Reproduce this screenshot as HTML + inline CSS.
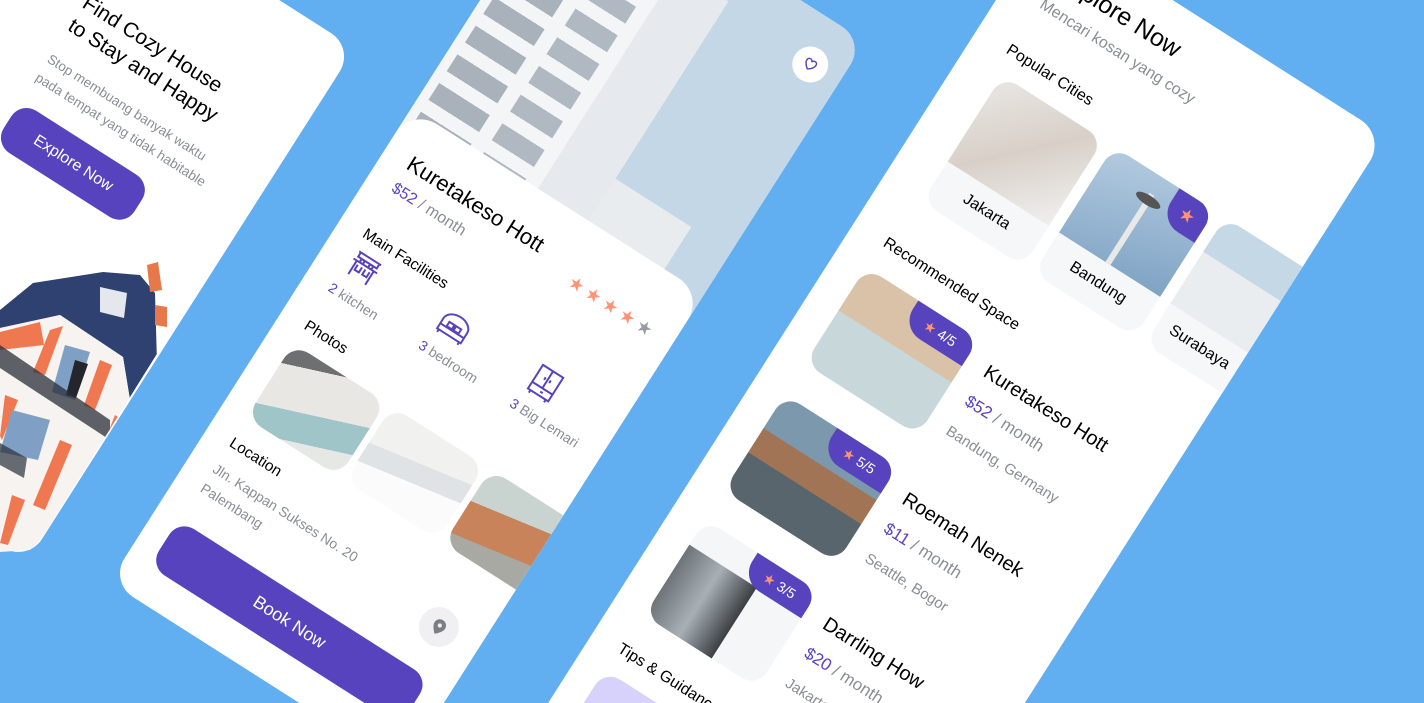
<!DOCTYPE html>
<html style="width:1424px;height:703px;overflow:hidden;background:#61AEF0"><head><meta charset="utf-8">
<style>
*{margin:0;padding:0;box-sizing:border-box}
body{width:1424px;height:703px;overflow:hidden;background:#61AEF0;font-family:"Liberation Sans",sans-serif;position:relative}
.rot{position:absolute;left:0;top:0;transform-origin:0 0;transform:rotate(32.5deg)}
.card{position:absolute;background:#fff;overflow:hidden}
.a{position:absolute;white-space:nowrap}
.t{color:#000}
.g{color:#8a8d96}
.p{color:#5843BE}
.btn{position:absolute;background:#5843BE;color:#fff;border-radius:18px;text-align:center}
.badge{position:absolute;right:0;top:0;background:#5843BE;color:#fff;border-radius:0 18px 0 22px;font-size:14px;line-height:32px;text-align:center}
.badge b{color:#FF9376;font-weight:400}
.ph{position:absolute;border-radius:18px;overflow:hidden}
</style></head><body>

<div class="rot">
 <!-- CARD 1 -->
 <div class="card" style="left:-40px;top:-150px;width:365px;height:610px;border-radius:28px">
  <div class="a t" style="left:112px;top:92px;font-size:21px;line-height:27px">Find Cozy House<br>to Stay and Happy</div>
  <div class="a g" style="left:112px;top:162px;font-size:13.5px;line-height:22px">Stop membuang banyak waktu<br>pada tempat yang tidak habitable</div>
  <div class="btn" style="left:112px;top:224px;width:155px;height:50px;line-height:50px;font-size:16px">Explore Now</div>
 </div>

 <!-- CARD 2 -->
 <div class="card" style="left:405px;top:-430px;width:347px;height:862px;border-radius:28px">
  <div style="position:absolute;left:0;top:0;width:347px;height:330px;background:#C4D7E6">
   <div style="position:absolute;left:0;top:40px;width:210px;height:300px;background:#f3f5f7"></div>
   <div style="position:absolute;left:10px;top:60px;width:60px;height:260px;background:repeating-linear-gradient(180deg,#a9b2bb 0 20px,#f3f5f7 20px 34px)"></div>
   <div style="position:absolute;left:85px;top:60px;width:50px;height:260px;background:repeating-linear-gradient(180deg,#b0b9c1 0 20px,#f3f5f7 20px 34px)"></div>
   <div style="position:absolute;left:150px;top:40px;width:60px;height:300px;background:#e6eaee"></div>
   <div style="position:absolute;left:210px;top:250px;width:90px;height:60px;background:#e8ecef"></div>
  </div>
  <div style="position:absolute;left:295px;top:31px;width:36px;height:36px;border-radius:50%;background:#fff;text-align:center;line-height:36px">
   <svg width="16" height="16" viewBox="0 0 24 24" style="vertical-align:middle"><path d="M12 20s-8-5-8-11a4 4 0 0 1 8-1 4 4 0 0 1 8 1c0 6-8 11-8 11z" fill="none" stroke="#5843BE" stroke-width="2.2"/></svg>
  </div>
  <div style="position:absolute;left:0;top:300px;width:347px;height:720px;background:#fff;border-radius:30px 30px 0 0"></div>
  <div class="a t" style="left:27px;top:334px;font-size:22px">Kuretakeso Hott</div>
  <div class="a" style="left:27px;top:368px;font-size:16px"><span class="p">$52</span><span class="g"> / month</span></div>
  <div class="a" style="left:226px;top:350px;font-size:18px;letter-spacing:4px;color:#FF9376">★★★★<span style="color:#989ba4">★</span></div>
  <div class="a t" style="left:27px;top:422px;font-size:15.5px">Main Facilities</div>
  <svg class="a" style="left:30px;top:446px" width="32" height="30" viewBox="0 0 32 30"><g fill="none" stroke="#5843BE" stroke-width="2"><path d="M3 3h26M5 3v5h22V3M2 12h28M6 12v16M26 12v16M9 15v6h5v-6M18 15v6h5v-6M11 8a2 2 0 1 0 0.1 0M21 8a2 2 0 1 0 0.1 0"/></g></svg>
  <div class="a" style="left:27px;top:486px;font-size:14px"><span class="p">2</span><span class="g"> kitchen</span></div>
  <svg class="a" style="left:137px;top:446px" width="34" height="30" viewBox="0 0 34 30"><g fill="none" stroke="#5843BE" stroke-width="2"><path d="M3 26V14a14 10 0 0 1 28 0v12H3zM3 20h28M10 14h6v5h-6zM18 14h6v5h-6zM5 26v3M29 26v3"/></g></svg>
  <div class="a" style="left:134px;top:486px;font-size:14px"><span class="p">3</span><span class="g"> bedroom</span></div>
  <svg class="a" style="left:246px;top:444px" width="30" height="34" viewBox="0 0 30 34"><g fill="none" stroke="#5843BE" stroke-width="2"><path d="M3 2h24v28H3zM15 2v20M3 22h24M6 30v3M24 30v3M12 11v3M18 11v3M15 26h3"/></g></svg>
  <div class="a" style="left:242px;top:486px;font-size:14px"><span class="p">3</span><span class="g"> Big Lemari</span></div>
  <div class="a t" style="left:27px;top:531px;font-size:15.5px">Photos</div>
  <div class="ph" style="left:27px;top:562px;width:110px;height:88px;background:linear-gradient(160deg,#6d6f70 0 18%,#e9e7e4 18% 55%,#9fc5c9 55% 80%,#e6e8e6 80%)"></div>
  <div class="ph" style="left:144px;top:562px;width:110px;height:88px;background:linear-gradient(170deg,#f1f1f0 0 40%,#dfe3e6 40% 60%,#fbfbfb 60%)"></div>
  <div class="ph" style="left:261px;top:562px;width:110px;height:88px;background:linear-gradient(170deg,#c9d3d0 0 35%,#c9835a 35% 70%,#a8a9a3 70%)"></div>
  <div class="a t" style="left:27px;top:670px;font-size:15.5px">Location</div>
  <div class="a g" style="left:27px;top:698px;font-size:14px;line-height:23px">Jln. Kappan Sukses No. 20<br>Palembang</div>
  <div style="position:absolute;left:282px;top:703px;width:40px;height:40px;border-radius:50%;background:#f0f0f2;text-align:center;line-height:40px">
   <svg width="14" height="16" viewBox="0 0 14 18" style="vertical-align:middle"><path d="M7 0a7 7 0 0 1 7 7c0 5-7 11-7 11S0 12 0 7a7 7 0 0 1 7-7z" fill="#7b7e86"/><circle cx="7" cy="7" r="2.4" fill="#f0f0f2"/></svg>
  </div>
  <div class="btn" style="left:25px;top:772px;width:297px;height:55px;line-height:55px;font-size:18px">Book Now</div>
 </div>

 <!-- CARD 3 -->
 <div class="card" style="left:840px;top:-630px;width:402px;height:1200px;border-radius:30px">
  <div class="a t" style="left:40px;top:26px;font-size:25px">Explore Now</div>
  <div class="a g" style="left:40px;top:65px;font-size:16px">Mencari kosan yang cozy</div>
  <div class="a t" style="left:36px;top:121px;font-size:16px">Popular Cities</div>
  <div class="ph" style="left:46px;top:155px;width:120px;height:150px;background:#f6f7f8">
   <div style="position:absolute;left:0;top:0;width:120px;height:102px;background:linear-gradient(135deg,#e9e6e3,#d8d0c8 50%,#f0efee)"></div>
   <div class="a t" style="left:0;width:120px;text-align:center;top:115px;font-size:16px">Jakarta</div>
  </div>
  <div class="ph" style="left:178px;top:155px;width:120px;height:150px;background:#f6f7f8">
   <div style="position:absolute;left:0;top:0;width:120px;height:102px;background:linear-gradient(160deg,#b3cbe0,#7fa3c4)"></div>
   <div style="position:absolute;left:55px;top:20px;width:6px;height:82px;background:#e8e8e8"></div>
   <div style="position:absolute;left:44px;top:22px;width:28px;height:10px;border-radius:50%;background:#555"></div>
   <div class="badge" style="width:42px;height:38px;line-height:38px;font-size:18px"><b>★</b></div>
   <div class="a t" style="left:0;width:120px;text-align:center;top:115px;font-size:16px">Bandung</div>
  </div>
  <div class="ph" style="left:310px;top:155px;width:120px;height:150px;background:#f6f7f8">
   <div style="position:absolute;left:0;top:0;width:120px;height:102px;background:linear-gradient(180deg,#c5d8e6 0 40%,#e9edf0 40%)"></div>
   <div class="a t" style="left:14px;top:115px;font-size:16px">Surabaya</div>
  </div>
  <div class="a t" style="left:36px;top:350px;font-size:16px">Recommended Space</div>

  <div class="ph" style="left:34px;top:390px;width:134px;height:114px;background:linear-gradient(180deg,#d9c2a8 0 45%,#c8d8da 45% 100%)">
   <div class="badge" style="width:72px"><b>★</b> 4/5</div></div>
  <div class="a t" style="left:190px;top:402px;font-size:20px">Kuretakeso Hott</div>
  <div class="a" style="left:190px;top:438px;font-size:17px"><span class="p">$52</span><span class="g"> / month</span></div>
  <div class="a g" style="left:190px;top:475px;font-size:15px">Bandung, Germany</div>

  <div class="ph" style="left:34px;top:541px;width:134px;height:114px;background:linear-gradient(180deg,#7b98ad 0 35%,#a07454 35% 60%,#58656d 60%)">
   <div class="badge" style="width:72px"><b>★</b> 5/5</div></div>
  <div class="a t" style="left:190px;top:553px;font-size:20px">Roemah Nenek</div>
  <div class="a" style="left:190px;top:589px;font-size:17px"><span class="p">$11</span><span class="g"> / month</span></div>
  <div class="a g" style="left:190px;top:626px;font-size:15px">Seattle, Bogor</div>

  <div class="ph" style="left:34px;top:689px;width:134px;height:114px;background:#f4f6f8">
   <div style="position:absolute;left:0;top:30px;width:80px;height:84px;background:linear-gradient(90deg,#6d7378,#a8b0b6,#3b3f43)"></div>
   <div class="badge" style="width:72px"><b>★</b> 3/5</div></div>
  <div class="a t" style="left:190px;top:701px;font-size:20px">Darrling How</div>
  <div class="a" style="left:190px;top:737px;font-size:17px"><span class="p">$20</span><span class="g"> / month</span></div>
  <div class="a g" style="left:190px;top:774px;font-size:15px">Jakarta</div>

  <div class="a t" style="left:30px;top:835px;font-size:16px">Tips &amp; Guidance</div>
  <div class="ph" style="left:30px;top:870px;width:80px;height:80px;background:#d7d2fb"></div>
 </div>
</div>

<!-- building photo on card 1 (screen coords) -->
<svg style="position:absolute;left:0;top:0" width="1424" height="703">
<defs><clipPath id="c1"><polygon points="0,240,228,240,42,538,30,550,0,552"/></clipPath></defs>
<g clip-path="url(#c1)">
<polygon points="0,310 33,283 103,272 140,275 155,293 157,363 130,400 123,357 60,315 0,328" fill="#2f4170"/>
<polygon points="100,287 127,293 124,318 100,312" fill="#e4e8ee"/>
<polygon points="147,265 158,262 162,290 150,292" fill="#e6784a"/>
<polygon points="155,305 167,307 167,327 155,325" fill="#e6784a"/>
<polygon points="0,328 60,315 123,357 130,400 110,450 75,520 45,552 0,552" fill="#f6f3f0"/>
<polygon points="0,332 40,322 44,345 0,350" fill="#f07850"/>
<polygon points="50,330 63,326 45,375 33,372" fill="#f07850"/>
<polygon points="100,360 112,365 95,410 84,405" fill="#f07850"/>
<polygon points="5,395 18,400 2,440 0,436" fill="#f07850"/>
<polygon points="60,440 72,445 45,510 33,505" fill="#f07850"/>
<polygon points="12,495 25,500 8,545 0,543" fill="#f07850"/>
<polygon points="115,415 122,420 100,470 95,466" fill="#f07850"/>
<polygon points="65,345 90,352 75,400 52,392" fill="#7f9fc4"/>
<polygon points="75,360 88,364 76,398 66,395" fill="#23262d"/>
<polygon points="12,410 50,420 38,460 0,452" fill="#7f9fc4"/>
<polygon points="0,345 110,420 110,440 0,368" fill="#2a2f3a" opacity=".75"/>
<polygon points="0,443 27,458 24,478 0,465" fill="#2a2f3a" opacity=".7"/>
<polygon points="130,400 157,363 150,410 125,445" fill="#c9c6c3"/>
</g>
</svg>
</body></html>
